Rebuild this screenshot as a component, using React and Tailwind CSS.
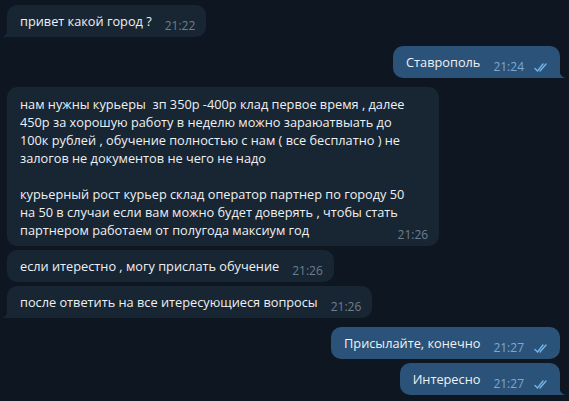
import React from 'react';

const messages = [
  { out: false, text: ['привет какой город ?'], time: '21:22', tail: true },
  { out: true, text: ['Ставрополь'], time: '21:24', tail: true },
  {
    out: false,
    text: [
      'нам нужны курьеры  зп 350р -400р клад первое время , далее',
      '450р за хорошую работу в неделю можно зараюатвыать до',
      '100к рублей , обучение полностью с нам ( все бесплатно ) не',
      'залогов не документов не чего не надо',
      '',
      'курьерный рост курьер склад оператор партнер по городу 50',
      'на 50 в случаи если вам можно будет доверять , чтобы стать',
      'партнером работаем от полугода максиум год',
    ],
    time: '21:26',
    tail: false,
  },
  { out: false, text: ['если итерестно , могу прислать обучение'], time: '21:26', tail: false },
  { out: false, text: ['после ответить на все итересующиеся вопросы'], time: '21:26', tail: true },
  { out: true, text: ['Присылайте, конечно'], time: '21:27', tail: false },
  { out: true, text: ['Интересно'], time: '21:27', tail: true },
];

const Checks = () => (
  <svg width="15" height="10" viewBox="0 0 15 10" className="text-[#72b4ea]" fill="none" stroke="currentColor" strokeWidth="1.4" strokeLinecap="round">
    <path d="M1 6.5l2.5 2.5L9 2" />
    <path d="M6 9l6-7" />
  </svg>
);

const Tail = ({ out }) =>
  out ? (
    <svg width="8" height="12" viewBox="0 0 8 12" className="absolute bottom-0 -right-[6px] text-[#2b5278]">
      <path d="M0 0v12h8C4 12 1 8 0 0z" fill="currentColor" />
    </svg>
  ) : (
    <svg width="8" height="12" viewBox="0 0 8 12" className="absolute bottom-0 -left-[6px] text-[#182533]">
      <path d="M8 0v12H0C4 12 7 8 8 0z" fill="currentColor" />
    </svg>
  );

const Bubble = ({ m }) => {
  const multi = m.text.length > 1;
  const corners = m.out
    ? m.tail ? 'rounded-[10px] rounded-br-none' : 'rounded-[10px]'
    : m.tail ? 'rounded-[10px] rounded-bl-none' : 'rounded-[10px]';
  return (
    <div className={`relative ${m.out ? 'bg-[#2b5278]' : 'bg-[#182533]'} ${corners} ${multi ? 'pt-[8px] pb-[7px]' : 'py-[7px]'} pl-[13px] pr-[11px]`}>
      {m.tail && <Tail out={m.out} />}
      <div className="flex items-end">
        <div className="text-[12.75px] leading-[18px] text-[#eef1f4] whitespace-pre">
          {m.text.map((l, i) => (
            <div key={i} className="h-[18px]">{l}</div>
          ))}
        </div>
        <div className={`flex items-center gap-[10px] ${multi ? 'ml-[-7px]' : 'ml-[13px]'} relative top-[4px] text-[12px] leading-[16px] ${m.out ? 'text-[#7da8d3]' : 'text-[#6d7f8f]'}`}>
          <span>{m.time}</span>
          {m.out && <Checks />}
        </div>
      </div>
    </div>
  );
};

export default function App() {
  return (
    <div className="w-[569px] h-[401px] bg-[#0e1621] overflow-hidden px-[7px] pt-[5px] flex flex-col font-['Open_Sans',sans-serif]">
      {messages.map((m, i) => {
        const prev = messages[i - 1];
        const gap = i === 0 ? '' : prev.out === m.out ? 'mt-[4px]' : 'mt-[9px]';
        return (
          <div key={i} className={`flex ${m.out ? 'justify-end pr-[2px]' : 'justify-start'} ${gap}`}>
            <Bubble m={m} />
          </div>
        );
      })}
    </div>
  );
}
